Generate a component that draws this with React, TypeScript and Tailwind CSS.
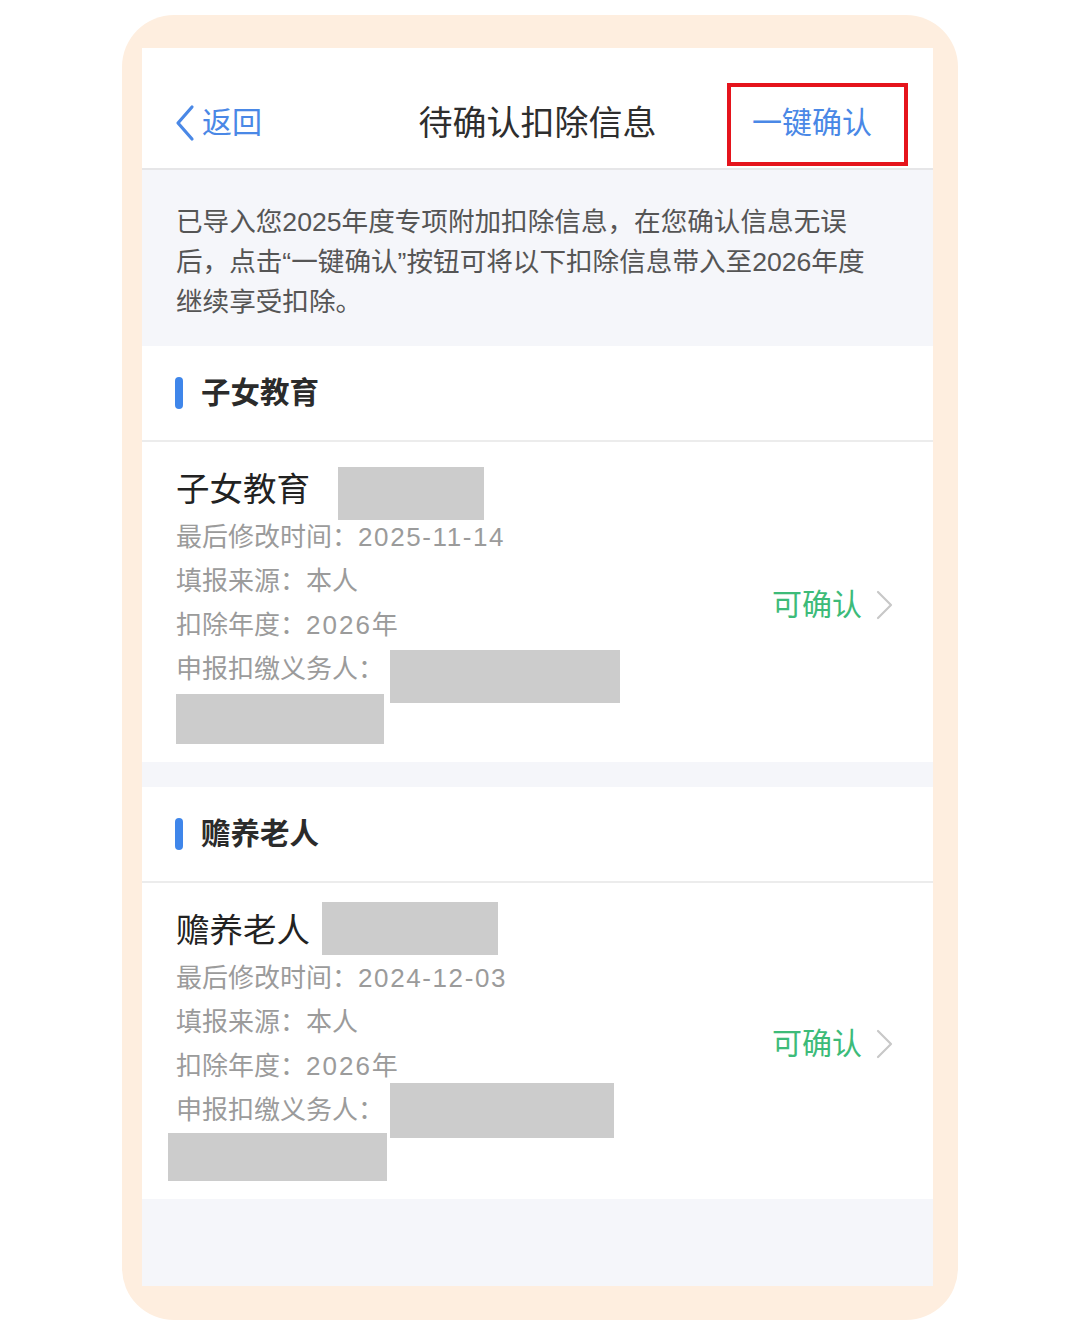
const font = "font-['Liberation_Sans','Noto_Sans_CJK_SC',sans-serif]";

type Item = {
  section: string;
  updated: string;
  titleBox: string;
  agentBox: string;
  wrapBox: string;
};

const items: Item[] = [
  {
    section: "子女教育",
    updated: "2025-11-14",
    titleBox: "ml-[28px] mt-[2px] w-[146px] h-[53px]",
    agentBox: "mt-[3px] w-[230px] h-[53px]",
    wrapBox: "ml-0 -mt-[9px] w-[208px] h-[50px]",
  },
  {
    section: "赡养老人",
    updated: "2024-12-03",
    titleBox: "ml-[12px] -mt-[4px] w-[176px] h-[53px]",
    agentBox: "-mt-[5px] w-[224px] h-[55px]",
    wrapBox: "-ml-[8px] -mt-[5px] w-[219px] h-[48px]",
  },
];

function SectionHeader({ title }: { title: string }) {
  return (
    <div className="flex h-[96px] items-center border-b-2 border-[#ececec] pl-[33px]">
      <div className="h-[32px] w-[8px] rounded-full bg-[#3f86ea]" />
      <span className="ml-[18px] text-[29.5px] font-bold leading-none text-[#2b2b2b]">{title}</span>
    </div>
  );
}

function Card({ item }: { item: Item }) {
  return (
    <div className="flex items-center pb-[18px] pl-[34px] pr-[40px] pt-[23px]">
      <div className="flex-1">
        <div className="flex h-[50px] items-start">
          <span className="text-[33.5px] leading-[50px] text-[#222]">{item.section}</span>
          <div className={`bg-[#cccccc] ${item.titleBox}`} />
        </div>
        <div className="text-[26px] leading-[44px] text-[#9b9b9b]">
          <div>
            最后修改时间：<span className="tracking-[1.6px]">{item.updated}</span>
          </div>
          <div>填报来源：本人</div>
          <div>
            扣除年度：<span className="tracking-[2px]">2026</span>年
          </div>
          <div className="flex items-start">
            <span>申报扣缴义务人：</span>
            <div className={`ml-[6px] bg-[#cccccc] ${item.agentBox}`} />
          </div>
          <div className={`bg-[#cccccc] ${item.wrapBox}`} />
        </div>
      </div>
      <div className="flex items-center">
        <span className="text-[30px] leading-none text-[#3dbb79]">可确认</span>
        <svg className="ml-[14px]" width="17" height="30" viewBox="0 0 17 30" fill="none">
          <polyline points="2,2 15,15 2,28" stroke="#c8c8c8" strokeWidth="2.2" strokeLinejoin="round" strokeLinecap="round" />
        </svg>
      </div>
    </div>
  );
}

export default function App() {
  return (
    <div className={`h-[1336px] w-[1080px] bg-white pt-[15px] ${font}`}>
      <div className="ml-[122px] h-[1305px] w-[836px] rounded-[52px] bg-[#feeedf] pb-[34px] pl-[20px] pr-[25px] pt-[33px]">
        <div className="flex h-[1238px] w-[791px] flex-col overflow-hidden bg-white">
          {/* nav bar */}
          <div className="relative border-b-2 border-[#e6e6e8] pb-[7px] pt-[37px]">
            <div className="flex h-[76px] items-center">
              <div className="flex w-[200px] items-center pl-[32px]">
                <svg width="22" height="38" viewBox="0 0 22 38" fill="none">
                  <polyline points="18,3 4,19 18,35" stroke="#4a88e6" strokeWidth="3.2" strokeLinecap="round" strokeLinejoin="round" />
                </svg>
                <span className="ml-[6px] text-[30px] leading-none text-[#4a88e6]">返回</span>
              </div>
              <div className="flex-1 text-center text-[34px] leading-none text-[#2e2e2e]">待确认扣除信息</div>
              <div className="w-[200px] pl-[19px] text-[30px] leading-none text-[#4a88e6]">一键确认</div>
            </div>
            <div className="absolute left-[585px] top-[35px] h-[83px] w-[181px] border-[4px] border-[#e5141c]" />
          </div>

          {/* notice */}
          <div className="bg-[#f5f6fa] pb-[24px] pl-[34px] pt-[32px] text-[26.6px] leading-[40px] text-[#555]">
            已导入您2025年度专项附加扣除信息，在您确认信息无误
            <br />
            后，点击“一键确认”按钮可将以下扣除信息带入至2026年度
            <br />
            继续享受扣除。
          </div>

          <SectionHeader title={items[0].section} />
          <Card item={items[0]} />
          <div className="h-[25px] shrink-0 bg-[#f5f6fa]" />
          <SectionHeader title={items[1].section} />
          <Card item={items[1]} />
          <div className="flex-1 bg-[#f5f6fa]" />
        </div>
      </div>
    </div>
  );
}
